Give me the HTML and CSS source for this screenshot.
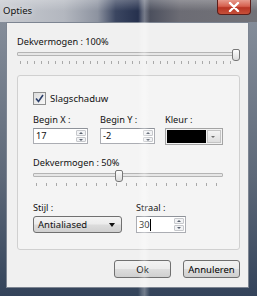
FILE: index.html
```html
<!DOCTYPE html>
<html>

<head>
    <meta charset="utf-8">
    <title>Opties</title>
    <link rel="stylesheet" href="styles.css">
</head>

<body>
    <div class="window">
        <div class="titlebar">
            <span class="title">Opties</span>
            <span class="close">
                <svg width="12" height="10" viewBox="0 0 12 10">
                    <path d="M2 1 L10 9 M10 1 L2 9" stroke="#fff" stroke-width="2.4" stroke-linecap="round"/>
                </svg>
            </span>
        </div>
        <div class="client">
            <div class="label first">Dekvermogen : 100%</div>
            <div class="slider wide">
                <div class="track"></div>
                <span class="thumb" style="left: 215px"></span>
                <div class="ticks"></div>
            </div>

            <div class="group">
                <label class="check">
                    <span class="box">
                        <svg width="9" height="9" viewBox="0 0 9 9">
                            <path d="M1 4.5 L3.5 7.5 L8 1" fill="none" stroke="#2b3f6b" stroke-width="1.6"/>
                        </svg>
                    </span>
                    Slagschaduw
                </label>

                <div class="fields">
                    <div class="field fx">
                        <div class="label">Begin X :</div>
                        <div class="spin"><span class="val">17</span><span class="arrows"><i class="up"></i><i class="down"></i></span></div>
                    </div>
                    <div class="field fy">
                        <div class="label">Begin Y :</div>
                        <div class="spin"><span class="val">-2</span><span class="arrows"><i class="up"></i><i class="down"></i></span></div>
                    </div>
                    <div class="field fk">
                        <div class="label">Kleur :</div>
                        <div class="colorbox"><span class="swatch"></span><span class="drop"><b></b></span></div>
                    </div>
                </div>

                <div class="label mid">Dekvermogen : 50%</div>
                <div class="slider narrow">
                    <div class="track"></div>
                    <span class="thumb" style="left: 82px"></span>
                    <div class="ticks"></div>
                </div>

                <div class="fields bottom">
                    <div class="field fs">
                        <div class="label">Stijl :</div>
                        <div class="combo"><span>Antialiased</span><b></b></div>
                    </div>
                    <div class="field fr">
                        <div class="label">Straal :</div>
                        <div class="spin"><span class="val">30<span class="caret"></span></span><span class="arrows"><i class="up"></i><i class="down"></i></span></div>
                    </div>
                </div>
            </div>

            <div class="buttons">
                <button class="btn">Ok</button>
                <button class="btn">Annuleren</button>
            </div>
        </div>
        <div class="glare"></div>
    </div>
</body>

</html>
```

FILE: styles.css
```css
body {
    margin: 0;
    font-family: "Noto Sans", "Open Sans", sans-serif;
    font-size: 9.2px;
    color: #111;
}

.window {
    position: relative;
    width: 257px;
    height: 296px;
    overflow: hidden;
    background: linear-gradient(180deg, #8a929e 0%, #5d6878 60%, #33435a 100%);
}

.titlebar {
    position: relative;
    height: 22px;
    background:
        linear-gradient(180deg, rgba(255, 255, 255, .25) 0%, rgba(255, 255, 255, 0) 50%, rgba(0, 0, 0, 0) 100%),
        linear-gradient(90deg, #c7cad0 0%, #b3b7bf 25%, #8d93a0 38%, #3b4661 45%, #25304d 54%, #4b4f5d 58%, #6c6c74 70%, #727278 100%);
}

.title {
    position: absolute;
    left: 3px;
    top: 4px;
    color: #111;
    font-size: 9.5px;
    text-shadow: 0 0 6px rgba(255, 255, 255, .9);
}

.close {
    position: absolute;
    right: 6px;
    top: 0;
    width: 34px;
    height: 15px;
    display: flex;
    align-items: center;
    justify-content: center;
    border: 1px solid #5b1e1a;
    border-top: none;
    border-radius: 0 0 4px 4px;
    background: linear-gradient(180deg, #e79a8d 0%, #d6604f 45%, #b83424 55%, #c6503a 100%);
    box-sizing: border-box;
}

.client {
    margin: 0 8px 0 6px;
    height: 266px;
    box-sizing: border-box;
    border: 1px solid #7d8592;
    background: #f0f0f0;
    padding: 12px 8px 0 10px;
}

.label {
    height: 14px;
    line-height: 14px;
    white-space: nowrap;
}

.slider {
    position: relative;
    height: 17px;
}

.slider .track {
    position: absolute;
    left: 0;
    right: 0;
    top: 3px;
    height: 2px;
    border: 1px solid #b4b4b4;
    border-radius: 1px;
    background: #e6e6e6;
}

.slider .thumb {
    position: absolute;
    top: 0;
    width: 6px;
    height: 10px;
    border: 1px solid #777;
    border-radius: 2px 2px 3px 3px;
    background: linear-gradient(180deg, #fdfdfd, #dadada);
}

.slider .ticks {
    position: absolute;
    left: 3px;
    right: 3px;
    top: 12px;
    height: 3px;
    background: repeating-linear-gradient(90deg, #a9a9a9 0, #a9a9a9 1px, transparent 1px, transparent 7px);
}

.slider.narrow .ticks {
    background: repeating-linear-gradient(90deg, #a9a9a9 0, #a9a9a9 1px, transparent 1px, transparent 10px);
    top: 13px;
}

.group {
    margin-top: 9px;
    height: 175px;
    box-sizing: border-box;
    border: 1px solid #d0d0d0;
    border-radius: 3px;
    background: #f4f4f4;
    padding: 16px 16px 0 15px;
}

.check {
    display: flex;
    align-items: center;
    height: 13px;
    gap: 4px;
    font-size: 9.5px;
}

.check .box {
    width: 11px;
    height: 11px;
    border: 1px solid #8e8f8f;
    background: linear-gradient(135deg, #dcdcdc, #f8f8f8);
    display: flex;
    align-items: center;
    justify-content: center;
}

.fields {
    display: flex;
    margin-top: 8px;
}

.field .label {
    margin-bottom: 1px;
}

.fx, .fy {
    width: 55px;
}

.fx {
    margin-right: 12px;
}

.fy {
    margin-right: 10px;
}

.fk {
    width: 58px;
}

.spin {
    display: flex;
    height: 16px;
    box-sizing: border-box;
    border: 1px solid #abadb3;
    border-top-color: #8e9299;
    background: #fff;
}

.spin .val {
    flex: 1;
    padding-left: 2px;
    line-height: 14px;
    display: flex;
    align-items: center;
}

.caret {
    display: inline-block;
    width: 1px;
    height: 12px;
    background: #000;
}

.arrows {
    width: 10px;
    display: flex;
    flex-direction: column;
    gap: 1px;
    padding: 1px 1px 1px 0;
}

.arrows i {
    flex: 1;
    border: 1px solid #c6c8cc;
    border-radius: 1px;
    background: #f1f2f4;
    position: relative;
}

.arrows i::after {
    content: "";
    position: absolute;
    left: 2px;
    border-left: 2px solid transparent;
    border-right: 2px solid transparent;
}

.arrows .up::after {
    top: 1px;
    border-bottom: 2px solid #58606e;
}

.arrows .down::after {
    top: 1px;
    border-top: 2px solid #58606e;
}

.colorbox {
    display: flex;
    height: 17px;
    box-sizing: border-box;
    border: 1px solid #a4a4a4;
    background: #f2f2f2;
    padding: 1px;
    gap: 1px;
}

.swatch {
    flex: 1;
    background: #000;
}

.drop {
    width: 12px;
    border: 1px solid #c4c4c4;
    background: linear-gradient(180deg, #f4f4f4, #dedede);
    position: relative;
}

.drop b {
    position: absolute;
    left: 3px;
    top: 5px;
    border-left: 2px solid transparent;
    border-right: 2px solid transparent;
    border-top: 2px solid #6f6f6f;
}

.label.mid {
    margin-top: 11px;
}

.slider.narrow {
    width: 190px;
    height: 18px;
}

.fields.bottom {
    margin-top: 13px;
}

.fs {
    width: 89px;
    margin-right: 14px;
}

.fr {
    width: 50px;
}

.fr .spin {
    height: 17px;
}

.combo {
    height: 17px;
    box-sizing: border-box;
    border: 1px solid #707070;
    border-radius: 3px;
    background: linear-gradient(180deg, #f4f4f4 0%, #ebebeb 48%, #dcdcdc 52%, #d0d0d0 100%);
    display: flex;
    align-items: center;
    justify-content: space-between;
    padding: 0 6px 0 4px;
    font-size: 9.5px;
}

.combo b {
    border-left: 3px solid transparent;
    border-right: 3px solid transparent;
    border-top: 4px solid #111;
}

.buttons {
    display: flex;
    justify-content: flex-end;
    gap: 12px;
    margin-top: 10px;
}

.btn {
    width: 57px;
    height: 18px;
    padding: 0;
    border: 1px solid #707070;
    border-radius: 3px;
    background: linear-gradient(180deg, #f2f2f2 0%, #ebebeb 48%, #dddddd 52%, #cfcfcf 100%);
    font: inherit;
    font-size: 9.5px;
    color: #000;
}

.glare {
    position: absolute;
    left: 138px;
    top: 0;
    width: 12px;
    height: 296px;
    background: linear-gradient(90deg, rgba(255, 255, 255, 0) 0%, rgba(255, 255, 255, .22) 35%, rgba(255, 255, 255, .3) 55%, rgba(255, 255, 255, 0) 100%);
    pointer-events: none;
}
```
